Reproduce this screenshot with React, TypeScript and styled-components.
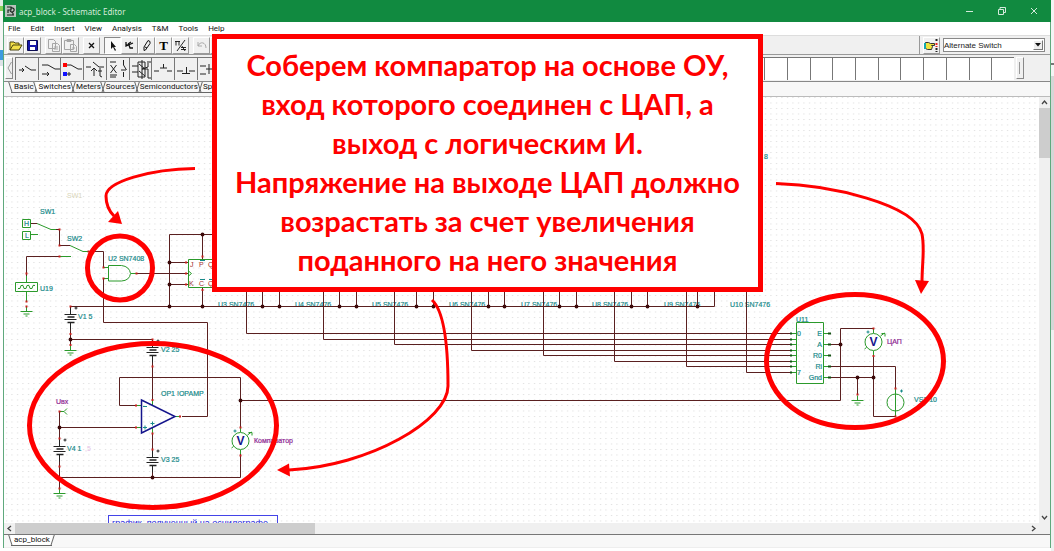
import React from "react";
import styled, { createGlobalStyle } from "styled-components";

const GlobalStyle = createGlobalStyle`
  * { box-sizing: border-box; }
  html, body { margin: 0; padding: 0; background: #fff; }
  body { font-family: "Liberation Sans", Arial, sans-serif; color: #111; }
  button { font: inherit; color: inherit; padding: 0; margin: 0; border: 0; background: none; }
`;

const Desktop = styled.div`
  position: relative;
  min-height: 100vh;
  display: flex;
  flex-direction: column;
  padding: 0 3px 3px 3px;
  background: linear-gradient(#e3ebe6 0 6px, #8bd05a 6px 11px, #f6f6f6 11px 50px, #3d9be0 50px 60px, #dfe3e8 60px 66px, #fff 66px) left / 3px 100% no-repeat,
    linear-gradient(#f4f4f4 0 63px, #777 63px 65px, #f4f4f4 65px 76px, #d6d6d6 76px 330px, #f0f0f0 330px) right / 3px 100% no-repeat, #fff;
`;

const Window = styled.main`
  flex: 1;
  display: flex;
  flex-direction: column;
  border: solid #5fa97d;
  border-width: 0 1px;
  background: #f0f0f0;
`;

const TitleBar = styled.header`
  display: flex;
  align-items: center;
  gap: 3px;
  height: 22px;
  margin: 0 -1px;
  padding: 0 3px 0 2px;
  background: #118a40;
  color: #d5eadc;
  font: 8px "Noto Sans", sans-serif;
`;

const Title = styled.h1`
  flex: 1;
  margin: 0;
  font: inherit;
`;

const CaptionButton = styled.button`
  display: grid;
  place-items: center;
  width: 29px;
  height: 22px;
`;

const MenuBar = styled.nav`
  display: flex;
  gap: 10px;
  height: 13px;
  padding-left: 4px;
  background: #fff;
  font: 8px/13px Roboto, sans-serif;
`;

const Toolbar = styled.div`
  display: flex;
  align-items: center;
  height: 20px;
  padding: 1px 5px 1px 3px;
  border-top: 1px solid #ddd;
  border-bottom: 1px solid #999;
`;

const ToolGroup = styled.div`
  display: flex;
  margin-right: 4px;
`;

const ToolButton = styled.button<{ $pressed?: boolean }>`
  display: grid;
  place-items: center;
  width: 17px;
  height: 17px;
  border: 1px solid;
  border-color: ${(p) => (p.$pressed ? "#888 #fff #fff #888" : "#fff #999 #999 #fff")};
  background: ${(p) => (p.$pressed ? "#f9f9f9" : "#f0f0f0")};
`;

const Spacer = styled.div`
  flex: 1;
`;

const Divider = styled.div`
  width: 1px;
  height: 18px;
  margin-right: 3px;
  background: #999;
`;

const SelectWrap = styled.label`
  position: relative;
  display: block;
  width: 102px;
  margin-left: 3px;
`;

const PartSelect = styled.select`
  display: block;
  appearance: none;
  width: 100%;
  height: 14px;
  padding: 0 12px 0 0;
  border: 1px solid #888;
  border-radius: 0;
  background: #fff;
  color: #222;
  font: 8px "Liberation Sans", Arial, sans-serif;
`;

const SelectArrow = styled.span`
  position: absolute;
  top: 2px;
  right: 2px;
  width: 10px;
  height: 10px;
  display: grid;
  place-items: center;
  border: 1px solid;
  border-color: #fff #777 #777 #fff;
  background: #eee;
  pointer-events: none;
`;

const Palette = styled.div`
  display: flex;
  align-items: stretch;
  height: 27px;
  padding: 2px 26px 2px 1px;
  border-bottom: 1px solid #888;
`;

const PaletteScroll = styled.button`
  display: grid;
  place-items: center;
  width: 8px;
  border: 1px solid;
  border-color: #fff #888 #888 #fff;
  color: #999;
`;

const Parts = styled.div`
  flex: 1;
  display: grid;
  grid-template-columns: repeat(44, 1fr);
  margin: 0 2px;
`;

const Part = styled.button<{ $empty?: boolean }>`
  display: grid;
  place-items: center;
  min-width: 0;
  border-left: 1px solid #777;
  border-top: 1px solid #777;
  background: ${(p) => (p.$empty ? "#fff" : "#f0f0f0")};
`;

const CategoryTabs = styled.div`
  display: flex;
  height: 15px;
  padding-left: 7px;
  border-bottom: 1px solid #bbb;
  background: #f7f7f7;
`;

const Tab = styled.button<{ $active?: boolean }>`
  position: relative;
  height: 11px;
  padding: 0 2px 0 3px;
  border-bottom: 1px solid #666;
  background: ${(p) => (p.$active ? "#fff" : "transparent")};
  font-family: Roboto, sans-serif;
  font-size: 8px;
  line-height: 10px;
  white-space: nowrap;
  &::before, &::after {
    content: "";
    position: absolute;
    top: 0;
    left: -1px;
    width: 1px;
    height: 11px;
    background: #666;
    transform: skewX(18deg);
  }
  &::after {
    left: auto;
    right: -1px;
    transform: skewX(-18deg);
  }
`;

const Workspace = styled.div`
  flex: 1;
  display: grid;
  grid-template-columns: 1fr 11px;
  grid-template-rows: 1fr 11px;
`;

const Sheet = styled.svg`
  display: block;
  width: 100%;
  height: 100%;
  min-height: 425px;
  background: #fff;
  font: 7px "Liberation Sans", Arial, sans-serif;
`;

const ScrollBar = styled.div<{ $vertical?: boolean }>`
  display: flex;
  flex-direction: ${(p) => (p.$vertical ? "column" : "row")};
  background: #f0f0f0;
`;

const ScrollButton = styled.button`
  display: grid;
  place-items: center;
  width: 11px;
  height: 11px;
`;

const Thumb = styled.div<{ $vertical?: boolean }>`
  background: #cdcdcd;
  ${(p) => (p.$vertical ? "height: 50px;" : "width: 29%;")}
`;

const SheetTabs = styled.footer`
  display: flex;
  height: 14px;
  padding-left: 7px;
  border-top: 1px solid #777;
  border-bottom: 1px solid #eee;
  background: #f8f8f8;
`;

const Annotations = styled.svg`
  position: absolute;
  inset: 0;
  width: 100%;
  height: 100%;
  pointer-events: none;
`;

const Callout = styled.section`
  position: absolute;
  top: 34px;
  left: 212px;
  width: 551px;
  padding: 6px 0 8px;
  border: 5px solid #f00;
  background: #fff;
  color: #f00;
  text-align: center;
  font: bold 29px/39px Lato, Carlito, "Open Sans", sans-serif;
  p { margin: 0; white-space: nowrap; }
`;

const WIRE = "#5a2020";
const GREEN = "#2b9a2b";
const TEAL = "#188a8a";

const Chevron = ({ d }: { d: string }) => (
  <svg width="7" height="7" viewBox="0 0 7 7" fill="none" stroke="#444" strokeWidth="1.3">
    <path d={d} />
  </svg>
);

const Glyph = ({ children }: { children: React.ReactNode }) => (
  <svg width="15" height="15" viewBox="0 0 15 15" fill="none" stroke="#111" strokeWidth="1">
    {children}
  </svg>
);

const partIcons: [string, React.ReactNode][] = [
  ["Switch", <path d="M3 12h5M6 10l2 2-2 2M9 8l6 4h5" />],
  ["Alternate switch", <path d="M3 7h6l7 4h5M3 16h7M8 14l2 2-2 2" />],
  ["Logic switch", <><path d="M6 7h4l7 4h4M6 16h4M8 14v4" /><path d="M2 5h4v4H2z" fill="#f00" stroke="none" /><path d="M2 14h4v4H2z" fill="#11f" stroke="none" /></>],
  ["Time switch", <path d="M2 9h5M9 4l6 5h5M10 18v-8M7 13l3-3 3 3M16 10v8l2 1M14 13h4" />],
  ["Relay", <path d="M3 4h6M3 19h6M3.500 7l6 8M9.500 7l-6 8M3 17h7M16.500 2v5l3 5M16.500 19v-5M14 12l5 0" />],
  ["Relay changeover", <path d="M2 8h6M2 14h6M8 4h7v15H8zM12 2v19M18 3v6l-6 2h6v9M9 6l6 5M9 13l6 5M19 4h2M18 20h4" />],
  ["Push button", <path d="M2 13h5M15 13h5M8 10h7M11.500 6v4" />],
  ["Push button NC", <path d="M2 13h6M14 13h6M7 15.500h8M11.500 9v6" />],
  ["Double push button", <path d="M2 8h6M2 16h6M8 11h7M11 6v10M15 8h5M15 16h5" />],
];

const Wire = ({ d }: { d: string }) => <path d={d} stroke={WIRE} fill="none" />;
const Lead = ({ d }: { d: string }) => <path d={d} stroke={GREEN} fill="none" />;

const Battery = ({ x, y }: { x: number; y: number }) => (
  <g transform={`translate(${x} ${y})`} stroke="#222" fill="none">
    <path d="M0-7V0M0 8v7M-6 0H6M-6 5H6" strokeWidth="1" />
    <path d="M-3 2.500H4M-3 8H4" strokeWidth="1.500" />
    <path d="M4-6.500h3M5.500-8v3" />
  </g>
);

const Ground = ({ x, y }: { x: number; y: number }) => (
  <path transform={`translate(${x} ${y})`} d="M0-5V0M-6 0H6M-3 2.500H3M-1 4.500H1" stroke={GREEN} fill="none" />
);

const Voltmeter = ({ x, y }: { x: number; y: number }) => (
  <g transform={`translate(${x} ${y})`}>
    <circle r="8.500" fill="#fff" stroke={GREEN} />
    <path d="M0-13v4M0 9v4M-9 7l2-1.500M7-6l4-3M8-8.500h3.500v3" stroke={GREEN} fill="none" />
    <path d="M-7-10h3M-5.500-11.500v3" stroke={TEAL} />
    <text y="4" textAnchor="middle" fontSize="12" fontWeight="bold" fill="#14148c">V</text>
  </g>
);

const counters = [
  { name: "U3", x: 218, out: 246.5 }, { name: "U4", x: 295, out: 323.5 },
  { name: "U5", x: 372, out: 394.5 }, { name: "U6", x: 449, out: 471.5 },
  { name: "U7", x: 521, out: 543.5 }, { name: "U8", x: 592, out: 614.5 },
  { name: "U9", x: 664, out: 686.5 }, { name: "U10", x: 730, out: 746.5 },
];
const pinY = [333.5, 339.5, 344.5, 350.5, 355.5, 361.5, 366.5, 372.5];
const busTaps = [262.5, 279.5, 339.5, 356.5, 416.5, 433.5, 488.5, 504.5, 559.5, 576.5, 631.5, 647.5, 697.5];
const joints: [number, number][] = [
  ...busTaps.map((x): [number, number] => [x, 306.5]),
  [202.5, 234.5], [169.5, 262.5], [169.5, 284.5], [169.5, 306.5], [202.5, 306.5],
  [70.5, 339.5], [59.5, 427.5], [152.5, 477.5], [240.5, 400.5], [840.5, 344.5], [857.5, 377.5], [873.5, 377.5],
];
const terminals: [number, number][] = [
  [59.5, 229.5], [59.5, 245.5], [59.5, 256.5], [26.5, 273.5], [26.5, 301.5], [26.5, 306.5], [88.5, 251.5],
  [103.5, 267.5], [103.5, 278.5], [136.5, 273.5], [186, 262.5], [186, 273.5], [186, 284.5], [202.5, 256.5],
  [202.5, 290], [70.5, 306.5], [70.5, 334], [70.5, 345], [152.5, 339.5], [152.5, 366.5], [152.5, 400],
  [136, 405.5], [136, 427.5], [180, 416.5], [152.5, 433.5], [152.5, 449.5], [59.5, 411.5], [59.5, 438.5],
  [59.5, 466.5], [59.5, 488.5], [240.5, 427.5], [240.5, 455.5], [873.5, 328.5], [873.5, 356], [895.5, 388.5],
  [857.5, 394.5], [895.5, 416.5],
];

const Schematic = () => (
  <Sheet role="img" aria-label="Schematic">
    <defs>
      <pattern id="grid" width="5.500" height="5.500" patternUnits="userSpaceOnUse">
        <rect x="2" y="0" width="1" height="1" fill="#d6d6d6" />
      </pattern>
    </defs>
    <rect width="100%" height="100%" fill="url(#grid)" />
    <g transform="translate(-4 -97)">
      <g fill={TEAL} stroke={TEAL} strokeWidth="0.200">
        <text x="764" y="159">8</text>
        <text x="40" y="214">SW1</text>
        <text x="67" y="241">SW2</text>
        <text x="108" y="261">U2 SN7408</text>
        <text x="40" y="291">U19</text>
        <text x="78" y="319">V1 5</text>
        <text x="161" y="352">V2 25</text>
        <text x="161" y="396">OP1 !OPAMP</text>
        <text x="67" y="451">V4 1</text>
        <text x="161" y="462">V3 25</text>
        <text x="796" y="322">U11</text>
        <text x="914" y="402">VS1 10</text>
        <text x="797" y="336">0</text>
        <text x="797" y="375">7</text>
        <g textAnchor="end">
          <text x="822" y="336">E</text>
          <text x="822" y="347">A</text>
          <text x="822" y="358">R0</text>
          <text x="822" y="369">Ri</text>
          <text x="822" y="380">Gnd</text>
        </g>
        <text x="24" y="226">H</text>
        <text x="25" y="238">L</text>
        {counters.map((c) => <text key={c.name} x={c.x} y="307">{c.name} SN7476</text>)}
      </g>
      <text x="67" y="198" fill="#d9d5b8">SW1</text>
      <text x="85" y="451" fill="#e5bfe5">,5</text>
      <g fill="#8c2391" stroke="#8c2391" strokeWidth="0.200">
        <text x="56" y="404">Uвх</text>
        <text x="254" y="443">Компаратор</text>
        <text x="887" y="344">ЦАП</text>
      </g>

      <Wire d="M31 223.500H37M52 229.500H59.500V245.500H70M26.500 282V256.500H59M93 251.500H103.500V267.500M103.500 278.500V322.500H207.500V416.500H182M136 273.500H188M169.500 306.500V234.500H212M169.500 262.500H188M169.500 284.500H188M202.500 234.500V259M202.500 288V306.500" />
      <Wire d="M70.500 314V306.500H714.500V290M70.500 322V345M70.500 339.500H152.500V346M152.500 356V400M136 405.500H119.500V377.500H240.500V428M240.500 400.500H840.500V328.500H873.500M59.500 411.500V442M59.500 427.500H136M152.500 433V453M152.500 466V477.500M59.500 460V489M59.500 477.500H240.500V454" />
      <Wire d="M828 344.500H840.500M828 366.500H895.500V390M828 377.500H873.500M857.500 377.500V395M873.500 355V416.500H895.500" />
      {counters.map((c, i) => <Wire key={c.name} d={`M${c.out} 290V${pinY[i]}H791`} />)}
      {busTaps.map((x) => <Wire key={x} d={`M${x} 290V306.500`} />)}

      <Lead d="M22.500 219.500h8v8h-8zM22.500 231.500h8v8h-8zM31 234.500h7M37 223.500L51 229.500h5M70 245.500L83 251.500h8M60 256.500h11" />
      <Lead d="M15.500 282.500h22v9h-22zM18 288.500h2l1-3h2l1 3h2l1-3h2l1 3h2l1-3h2M26.500 276v6M26.500 292v9M103 267.500h5M103 278.500h5M131 273.500h5" />
      <Lead d="M108.500 265.500h13q8 1 9 8q-1 7-9 7.500h-13zM188.500 287.500V259.500H214M188.500 287.500H214M188.500 271l3 2.500l-3 2.500" />
      <Lead d="M136 405.500h5M136 427.500h5M175 416.500h5M152.500 400v5M152.500 428v5M60 411.500h4M67 408.500l-3 3l3 3M796.500 322.500h27v61h-27z" />
      {pinY.map((y) => <g key={y}><Lead d={`M791 ${y}h5`} /><rect x="790" y={y - 1} width="2" height="2" fill="#145214" /></g>)}
      {[333.5, 344.5, 355.5, 366.5, 377.5].map((y) => <g key={y}><Lead d={`M824 ${y}h5`} /><rect x="828" y={y - 1} width="3" height="2" fill="#145214" /></g>)}

      <g fill="#a33030">
        <text x="190" y="267">J</text><text x="199" y="267">P</text><text x="208" y="267">Q</text>
        <text x="189" y="286">K</text><text x="199" y="286">C</text><text x="208" y="286">Q</text>
      </g>
      <path d="M200 260.500h5M200 279.500h5M209 279.500h5" stroke={TEAL} />
      <path d="M141.500 400v33l33.500-16.500z" fill="none" stroke="#14148c" strokeWidth="1.500" />
      <path d="M143 406.500h4M143 427.500h4M145 425.500v4M150.500 423.500h4M152.500 421.500v4" stroke={TEAL} />

      <Battery x={70.5} y={314.5} />
      <Battery x={152.5} y={347.5} />
      <Battery x={152.5} y={457.5} />
      <Battery x={59.5} y={446.5} />
      <Ground x={26.5} y={311.5} />
      <Ground x={70.5} y={350.5} />
      <Ground x={59.5} y={493.5} />
      <Ground x={857.5} y={400.5} />
      <Voltmeter x={240.5} y={441} />
      <Voltmeter x={873.5} y={342} />
      <circle cx="895.500" cy="402.500" r="8.500" fill="none" stroke={GREEN} />
      <path d="M895.500 389v27" stroke={GREEN} />
      <path d="M900 391h3M901.500 389.500v3" stroke={TEAL} />
      {joints.map(([x, y]) => <circle key={`${x}-${y}`} cx={x} cy={y} r="1.900" fill="#3c0a0a" />)}
      {terminals.map(([x, y]) => <rect key={`${x}-${y}`} x={x - 1} y={y - 1} width="2" height="2" fill="#c8201c" />)}

      <rect x="108.500" y="515.500" width="169" height="16" fill="none" stroke="#4444e8" />
      <text x="112" y="526" fontSize="9" fill="#2222dd">график, полученный на осцилографе</text>
    </g>
  </Sheet>
);

export default function App() {
  return (
    <Desktop>
      <GlobalStyle />
      <Window>
        <TitleBar>
          <svg width="11" height="12" viewBox="0 0 11 12">
            <rect width="11" height="12" fill="#b9c4bd" />
            <path d="M2 2h4v3H3v3M6 3c4-1 4 4 1 4M5 6l3 2M2 10h7M8 8v2" fill="none" stroke="#1c2620" strokeWidth="1.200" />
          </svg>
          <Title>acp_block - Schematic Editor</Title>
          <CaptionButton aria-label="Minimize"><svg width="8" height="8" stroke="#d5eadc"><path d="M0 4.500h7" /></svg></CaptionButton>
          <CaptionButton aria-label="Restore"><svg width="8" height="8" fill="none" stroke="#d5eadc"><path d="M.5 2.500h5v5h-5zM2 2V.5h5.500v5H6" /></svg></CaptionButton>
          <CaptionButton aria-label="Close"><svg width="8" height="8" stroke="#d5eadc"><path d="M1 1l6 6M7 1L1 7" /></svg></CaptionButton>
        </TitleBar>
        <MenuBar>
          {["File", "Edit", "Insert", "View", "Analysis", "T&M", "Tools", "Help"].map((m) => <button key={m}>{m}</button>)}
        </MenuBar>
        <Toolbar>
          <ToolGroup>
            <ToolButton aria-label="Open"><Glyph><path d="M2 12V4h4l1 1h4v2M2 12l3-5h9l-3 5z" fill="#f3e04a" stroke="#4a4510" /></Glyph></ToolButton>
            <ToolButton aria-label="Save"><Glyph><path d="M2.500 2.500h10v10h-10z" fill="#1717a8" stroke="#0a0a50" /><path d="M5 3h6v4H5zM5 9h5v3H5z" fill="#fff" stroke="none" /></Glyph></ToolButton>
          </ToolGroup>
          <ToolGroup>
            <ToolButton aria-label="Copy"><Glyph><path d="M2.500 1.500h5l2 2v7h-7zM6.500 5.500h5l2 2v6h-7zM8 9h4M8 11h4" fill="#f0f0f0" stroke="#a5a5a5" /></Glyph></ToolButton>
            <ToolButton aria-label="Paste"><Glyph><path d="M1.500 2.500h9v9h-9zM4 1.500h4v2H4zM7.500 6.500h4l2 2v5h-6zM9 10h3" fill="#f0f0f0" stroke="#a5a5a5" /></Glyph></ToolButton>
          </ToolGroup>
          <ToolGroup>
            <ToolButton aria-label="Delete"><Glyph><path d="M5 5l5 5M10 5l-5 5" strokeWidth="1.300" /></Glyph></ToolButton>
          </ToolGroup>
          <ToolGroup>
            <ToolButton $pressed aria-label="Select"><Glyph><path d="M6 3v8l2-2 2 4 1-1-2-3h2z" fill="#111" stroke="none" /></Glyph></ToolButton>
            <ToolButton aria-label="Last component"><Glyph><path d="M4 4v4l7-3M4 7h3l1 3h3M6 6l3-2" strokeWidth="1.300" /></Glyph></ToolButton>
            <ToolButton aria-label="Wire"><Glyph><path d="M5 12.500V9l4-6.500 2 1v2L6.500 12zM6 9l2 1" /></Glyph></ToolButton>
            <ToolButton aria-label="Text"><svg width="15" height="15"><text x="7.500" y="12" textAnchor="middle" fontFamily="Liberation Serif" fontWeight="bold" fontSize="13">T</text></svg></ToolButton>
            <ToolButton aria-label="Equation"><Glyph><path d="M2 3.500h5M3 3.500v4M6 3.500v4M4 13L12 2M8 9.500h5M8 11.500h5M9 8l3 5" strokeWidth="0.900" /></Glyph></ToolButton>
          </ToolGroup>
          <ToolGroup>
            <ToolButton aria-label="Undo"><Glyph><path d="M4 4v4h4M4 8c2-5 8-4 8 2" stroke="#aaa" /></Glyph></ToolButton>
            <ToolButton aria-label="Redo"><Glyph><path d="M11 4v4H7M11 8c-2-5-8-4-8 2" stroke="#aaa" /></Glyph></ToolButton>
          </ToolGroup>
          <Spacer />
          <Divider />
          <ToolButton aria-label="Find component"><Glyph><path d="M1.500 4.500h3l2 1h4v2h-3l1 1-1 3h-4l-2-1z" fill="#efe23d" stroke="#333" /><path d="M1 5v6" stroke="#15a8b0" strokeWidth="2" /><path d="M12.500 1v3M12.500 10v4" stroke="#222" strokeWidth="2" strokeDasharray="2 1" /><path d="M12.500 5v4" stroke="#e22" strokeWidth="2" strokeDasharray="2 1" /></Glyph></ToolButton>
          <SelectWrap>
            <PartSelect aria-label="Component" defaultValue="Alternate Switch"><option>Alternate Switch</option></PartSelect>
            <SelectArrow><svg width="6" height="4"><path d="M0 0h6L3 3.500z" fill="#111" /></svg></SelectArrow>
          </SelectWrap>
        </Toolbar>
        <Palette>
          <PaletteScroll aria-label="Scroll left"><svg width="5" height="14" fill="none" stroke="currentColor"><path d="M4.500 1L1 7l3.500 6" /></svg></PaletteScroll>
          <Parts>
            {Array.from({ length: 44 }, (_, i) => {
              const icon = partIcons[i];
              return (
                <Part key={i} $empty={!icon} aria-label={icon ? icon[0] : "Empty"}>
                  {icon && <svg width="22" height="22" viewBox="0 0 22 22" fill="none" stroke="#222">{icon[1]}</svg>}
                </Part>
              );
            })}
          </Parts>
          <PaletteScroll aria-label="Scroll right"><svg width="5" height="14" fill="none" stroke="currentColor"><path d="M1.500 1v12" /></svg></PaletteScroll>
        </Palette>
        <CategoryTabs>
          {["Basic", "Switches", "Meters", "Sources", "Semiconductors", "Spice Macros"].map((t) => (
            <Tab key={t} $active={t === "Switches"}>{t}</Tab>
          ))}
        </CategoryTabs>
        <Workspace>
          <Schematic />
          <ScrollBar $vertical>
            <ScrollButton aria-label="Scroll up"><Chevron d="M1 5l2.500-3L6 5" /></ScrollButton>
            <Thumb $vertical />
            <Spacer />
            <ScrollButton aria-label="Scroll down"><Chevron d="M1 2l2.500 3L6 2" /></ScrollButton>
          </ScrollBar>
          <ScrollBar>
            <ScrollButton aria-label="Scroll left"><Chevron d="M5 1L2 3.500 5 6" /></ScrollButton>
            <Thumb />
            <Spacer />
            <ScrollButton aria-label="Scroll right"><Chevron d="M2 1l3 2.500L2 6" /></ScrollButton>
          </ScrollBar>
          <ScrollBar />
        </Workspace>
        <SheetTabs>
          <Tab $active>acp_block</Tab>
        </SheetTabs>
      </Window>
      <Annotations aria-hidden="true" fill="none" stroke="#f00">
        <g strokeWidth="5">
          <ellipse cx="120" cy="268" rx="32.500" ry="32" />
          <ellipse cx="153" cy="425.500" rx="123.500" ry="82" />
          <ellipse cx="855" cy="361" rx="88.500" ry="66.500" />
        </g>
        <g strokeWidth="3">
          <path d="M195 168.500C150 169 106 182 106 196C106 205 109 211 114 216" />
          <path d="M776 183.500C830 185 915 204 922 234C925 249 922 262 922 283" />
          <path d="M432 300C445 312 448 350 448 386C448 420 370 466 289 470" />
        </g>
        <g fill="#f00" stroke="none">
          <path d="M122 224l-14-2l10-11z" />
          <path d="M921 294l-6-14l14 1z" />
          <path d="M277 470l12-6.500l1 13z" />
        </g>
      </Annotations>
      <Callout>
        <p>Соберем компаратор на основе ОУ,</p>
        <p>вход которого соединен с ЦАП, а</p>
        <p>выход с логическим И.</p>
        <p>Напряжение на выходе ЦАП должно</p>
        <p>возрастать за счет увеличения</p>
        <p>поданного на него значения</p>
      </Callout>
    </Desktop>
  );
}
